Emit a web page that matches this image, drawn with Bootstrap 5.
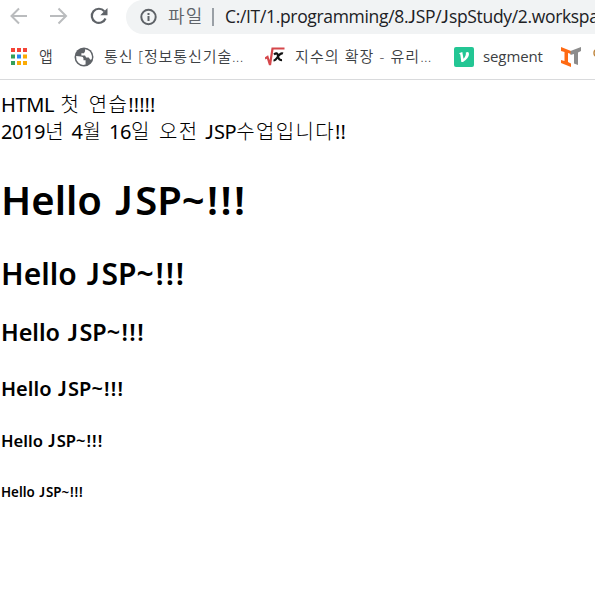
<!DOCTYPE html>
<html lang="ko">
<head>
<meta charset="utf-8">
<meta name="viewport" content="width=device-width, initial-scale=1">
<title>Hello JSP</title>
<link href="https://cdn.jsdelivr.net/npm/bootstrap@5.3.0/dist/css/bootstrap.min.css" rel="stylesheet">
<style>
body{font-family:"Noto Sans","Noto Sans CJK KR",sans-serif;color:#000;background:#fff;overflow:hidden}
svg{display:block;flex:none}
.toolbar{height:34px}
.nav-icons{width:126px;padding-left:9px;gap:20px;flex:none}
.omnibox{height:34px;background:#f1f3f4;border-radius:17px 0 0 17px;padding-left:13px;flex:none;width:469px}
.scheme{font:350 18px/30px "Noto Sans CJK KR",sans-serif;color:#5f6368;margin-left:10px;width:36px;height:34px;letter-spacing:1.2px;flex:none}
.divider{width:2px;height:18px;background:#9aa0a6;margin:0 11px 0 8px;flex:none}
.address{font-family:"Open Sans","Noto Sans",sans-serif;font-size:17.5px;line-height:32px;height:34px;color:#202124;letter-spacing:-.33px}
.cap-j{font-family:Lato,sans-serif;margin-right:.03em}
.bookmarks{height:46px;border-bottom:1px solid #d9dadc;font-size:15px;font-family:"Open Sans","Noto Sans CJK KR",sans-serif;color:#3c4043;padding-left:10px;font-weight:350}
.bm-text{line-height:22px;padding-bottom:2px;letter-spacing:.9px;flex:none}
.bm-text.t1{margin-left:11px;width:35px}
.bm-text.t2{margin-left:10px;width:161px}
.bm-text.t3{margin-left:10px;width:159px;letter-spacing:1.1px}
.bm-text.t4{margin-left:9px;width:78px;font-weight:400;letter-spacing:-.1px}
.bm-text .dots{letter-spacing:.2px}
.page{padding:11px 0 0 1px}
.intro{font-size:20px;line-height:27px;letter-spacing:-.4px;word-spacing:1.8px}
.ko{font-weight:300;letter-spacing:1.35px}
.bangs{letter-spacing:.1px}
.page h1{font-size:40px;line-height:54px;margin:28px 0 0}
.page h2{font-size:30px;line-height:40px;margin:26px 0 0}
.page h3{font-size:23.4px;line-height:32px;margin:22px 0 0}
.page h4{font-size:20px;line-height:27px;margin:27px 0 0}
.page h5{font-size:16.6px;line-height:22px;margin:28px 0 0}
.page h6{font-size:13.4px;line-height:18px;margin:31px 0 0}
.page :is(h1,h2,h3,h4,h5,h6){font-weight:600;word-spacing:.07em}
:is(h1,h2,h3,h4,h5,h6) .cap-j{font-weight:700;margin-right:.07em}
.tail{letter-spacing:.06em}
</style>
<script src="https://cdn.jsdelivr.net/npm/bootstrap@5.3.0/dist/js/bootstrap.bundle.min.js"></script>
</head>
<body>
<header>
<div class="toolbar d-flex text-nowrap overflow-hidden">
  <div class="nav-icons d-flex align-items-center">
    <svg width="20" height="20" viewBox="0 0 20 20" fill="none" stroke="#babcbe" stroke-width="2"><path d="M18 9H3M10 1.500L2.500 9L10 16.500"/></svg>
    <svg width="20" height="20" viewBox="0 0 20 20" fill="none" stroke="#babcbe" stroke-width="2"><path d="M1 9H16.500M9.500 1.500L17 9L9.500 16.500"/></svg>
    <svg width="20" height="20" viewBox="0 0 20 20"><path d="M15.300 4.200A7.100 7.100 0 1 0 16.500 11.500" fill="none" stroke="#5f6368" stroke-width="2.200"/><path d="M18.500 1V8.200H11.300Z" fill="#5f6368"/></svg>
  </div>
  <div class="omnibox d-flex align-items-center overflow-hidden">
    <svg width="19" height="19" viewBox="0 0 19 19"><circle cx="9.500" cy="9" r="7.200" fill="none" stroke="#5f6368" stroke-width="2"/><path d="M8.500 8h2v5h-2zM8.500 5h2v2h-2z" fill="#5f6368"/></svg>
    <span class="scheme">파일</span><span class="divider"></span><span class="address">C:/IT/1.programming/8.<span class="cap-j">J</span>SP/<span class="cap-j">J</span>spStudy/2.workspa</span>
  </div>
</div>
<nav class="bookmarks d-flex align-items-center text-nowrap overflow-hidden">
  <svg width="18" height="18" viewBox="0 0 18 18"><path d="M1 0h4v4H1zM7 0h4v4H7zM13 0h4v4h-4z" fill="#f44336"/><path d="M1 6.500h4v4H1zM1 13h4v4H1z" fill="#34a05a"/><path d="M7 6.500h4v4H7z" fill="#2585f4"/><path d="M13 6.500h4v4h-4zM7 13h4v4H7zM13 13h4v4h-4z" fill="#fbab05"/></svg>
  <span class="bm-text t1">앱</span>
  <svg width="20" height="20" viewBox="0 0 19 19"><circle cx="9.500" cy="9.500" r="9" fill="#5f6368"/><path d="M2 8.500L6.500 9Q9 9 9 11V12.500H11V16.600Q7 18 4 14.800Q1.700 12 2 8.500ZM10.500 2.100Q16 2.800 17 8.500V11Q16 13 15 11.500L14 10H11.500L10.500 8H7V6H9.500L10.500 4Z" fill="#fff"/></svg>
  <span class="bm-text t2">통신 [정보통신기술<span class="dots">...</span></span>
  <svg width="20" height="20" viewBox="0 0 20 20"><path d="M0 11.500L2.500 10L5 18L7.500 1.500H19.500" fill="none" stroke="#d5474b" stroke-width="2.200"/><path d="M9 7.500Q12.500 4.500 13 9T17 13M18 6.500Q15.500 5.500 13 9.500T8.500 13.500" fill="none" stroke="#111" stroke-width="2.200"/></svg>
  <span class="bm-text t3">지수의 확장 - 유리<span class="dots">...</span></span>
  <svg width="20" height="20" viewBox="0 0 20 20"><rect width="20" height="20" rx="2" fill="#23c694"/><path d="M5 6.300L8.300 5L9.500 11.800Q12.500 8.600 11.800 5.500Q15 4 15 7Q15 11 9 15H7.300L6.300 7.600Z" fill="#fff"/></svg>
  <span class="bm-text t4">segment</span>
  <svg width="20" height="20" viewBox="0 0 20 20"><path d="M0 0L10 4V7L7 6V15L10 16.500V20L0 16V13L3.500 14V5L0 4Z" fill="#ff6a13"/><path d="M9.500 4L20 0V4L17 5.500V18L13 16.500V7L9.500 8Z" fill="#8c8c8c"/></svg>
  <svg class="ms-auto" width="2" height="20" viewBox="0 0 2 20"><path d="M2 3Q0 6 2 9" fill="none" stroke="#c28a45" stroke-width="1.500"/></svg>
</nav>
</header>
<main class="page text-nowrap">
<div class="intro"><div>HTML <span class="ko">첫 연습</span><span class="bangs">!!!!!</span></div><div>2019<span class="ko">년</span> 4<span class="ko">월</span> 16<span class="ko">일 오전</span> <span class="cap-j">J</span>SP<span class="ko">수업입니다</span><span class="bangs">!!</span></div></div>
<h1>Hello <span class="cap-j">J</span>SP<span class="tail">~!!!</span></h1>
<h2>Hello <span class="cap-j">J</span>SP<span class="tail">~!!!</span></h2>
<h3>Hello <span class="cap-j">J</span>SP<span class="tail">~!!!</span></h3>
<h4>Hello <span class="cap-j">J</span>SP<span class="tail">~!!!</span></h4>
<h5>Hello <span class="cap-j">J</span>SP<span class="tail">~!!!</span></h5>
<h6>Hello <span class="cap-j">J</span>SP<span class="tail">~!!!</span></h6>
</main>
</body>
</html>
